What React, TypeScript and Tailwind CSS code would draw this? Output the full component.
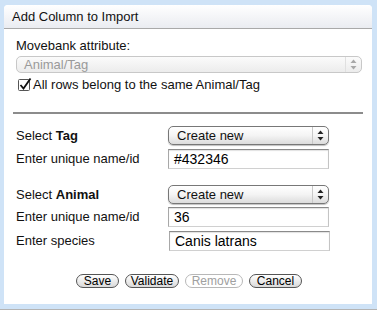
import React from "react";

const font = { fontFamily: '"Liberation Sans", Arial, sans-serif' };

function Arrows({ dim }: { dim?: boolean }) {
  const c = dim ? "#a8a8a8" : "#222";
  return (
    <svg width="7" height="11" viewBox="0 0 7 11">
      <path d="M3.5 0.5 L6.5 4 L0.5 4 Z" fill={c} />
      <path d="M3.5 10.5 L6.5 7 L0.5 7 Z" fill={c} />
    </svg>
  );
}

function FakeSelect({ value, disabled, className }: { value: string; disabled?: boolean; className: string }) {
  return (
    <div
      className={
        "flex items-center rounded-[5px] border " +
        (disabled
          ? "border-[#c8c8c8] bg-gradient-to-b from-[#fbfbfb] to-[#ececec] text-[#9a9a9a] "
          : "border-[#777] bg-gradient-to-b from-white via-[#f4f4f4] to-[#dcdcdc] text-[#111] shadow-[0_1px_1px_rgba(0,0,0,0.25)] ") +
        className
      }
    >
      <div className={"flex-1 text-[13px] leading-none " + (disabled ? "pl-[7px]" : "pl-[8px]")}>{value}</div>
      <div className={"flex h-full w-[16px] items-center justify-center border-l " + (disabled ? "border-[#e0e0e0]" : "border-[#c8c8c8]")}>
        <Arrows dim={disabled} />
      </div>
    </div>
  );
}

function TextBox({ value }: { value: string }) {
  return (
    <div className="flex h-[20px] w-[161px] items-center border border-t-[#8a8a8a] border-l-[#a8a8a8] border-r-[#c4c4c4] border-b-[#d0d0d0] bg-white pl-[5px] text-[14px] text-black shadow-[inset_0_1px_1px_rgba(0,0,0,0.12)]">
      {value}
    </div>
  );
}

function Pill({ label, disabled, w }: { label: string; disabled?: boolean; w: string }) {
  return (
    <div
      className={
        "flex h-[14px] items-center justify-center rounded-full border text-[12px] leading-none " +
        (disabled
          ? "border-[#b8b8b8] bg-white text-[#a0a0a0] "
          : "border-[#555] bg-gradient-to-b from-white to-[#dadada] text-black ") +
        w
      }
    >
      {label}
    </div>
  );
}

export default function App() {
  return (
    <div className="h-[310px] w-[377px] border-b border-[#b4b4b4] bg-[#cfe3f7] pt-[5px] pl-[4px] pr-[5px]" style={font}>
      <div className="flex h-[299px] flex-col rounded-t-[4px] bg-white">
        {/* Header */}
        <div className="flex h-[24px] items-center rounded-t-[4px] border-b border-[#a9a9a9] bg-gradient-to-b from-white to-[#eaecf1] pl-[8px] text-[13px] text-[#111]">
          Add Column to Import
        </div>

        <div className="px-[12px] pt-[8px] text-[13px] text-[#111]">
          <div className="h-[17px] leading-[17px]">Movebank attribute:</div>
          <FakeSelect value="Animal/Tag" disabled className="mt-[2px] h-[17px] w-[346px]" />
          <div className="mt-[4px] flex h-[16px] items-center">
            <svg width="14" height="14" viewBox="0 0 14 14" className="ml-[2px]">
              <rect x="0.5" y="1.5" width="11" height="11" rx="1" fill="#fff" stroke="#555" />
              <path d="M2.5 7 L5.5 10.5 L12.5 0.5" fill="none" stroke="#111" strokeWidth="1.8" />
            </svg>
            <span className="ml-[1px]">All rows belong to the same Animal/Tag</span>
          </div>
        </div>

        <div className="mx-[9px] mt-[19px] h-[2px] bg-[#8c8c8c]" />

        <div className="px-[12px] pt-[12px] text-[13px] text-[#111]">
          <div className="flex h-[19px] items-center">
            <div className="w-[152px]">
              Select <b>Tag</b>
            </div>
            <FakeSelect value="Create new" className="h-[19px] w-[161px]" />
          </div>
          <div className="mt-[4px] flex items-center">
            <div className="w-[152px]">Enter unique name/id</div>
            <TextBox value="#432346" />
          </div>

          <div className="mt-[16px] flex h-[19px] items-center">
            <div className="w-[152px]">
              Select <b>Animal</b>
            </div>
            <FakeSelect value="Create new" className="h-[19px] w-[161px]" />
          </div>
          <div className="mt-[3px] flex items-center">
            <div className="w-[152px]">Enter unique name/id</div>
            <TextBox value="36" />
          </div>
          <div className="mt-[4px] flex items-center">
            <div className="w-[153px]">Enter species</div>
            <TextBox value="Canis latrans" />
          </div>
        </div>

        <div className="mt-[23px] flex justify-center gap-[6px] pl-[2px]">
          <Pill label="Save" w="w-[43px]" />
          <Pill label="Validate" w="w-[54px]" />
          <Pill label="Remove" disabled w="w-[58px]" />
          <Pill label="Cancel" w="w-[53px]" />
        </div>
      </div>
    </div>
  );
}
